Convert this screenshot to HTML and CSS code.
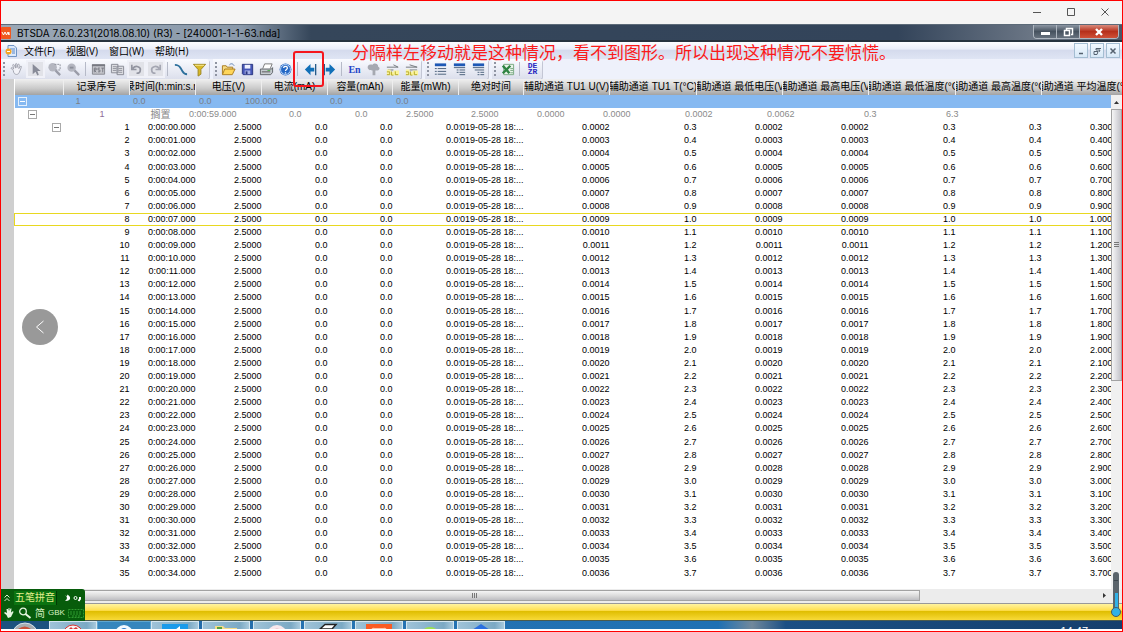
FILE: index.html
```html
<!DOCTYPE html>
<html lang="zh-CN">
<head>
    <meta charset="UTF-8">
    <meta name="viewport" content="width=device-width, initial-scale=1.0">
    <title>BTSDA</title>
    <link rel="stylesheet" href="styles.css">
</head>
<body>
    <div class="viewer">
        <header class="viewer-bar">
            <button aria-label="最小化"><svg width="10" height="10"><path d="M1 5.500h8"/></svg></button>
            <button aria-label="最大化"><svg width="10" height="10"><path d="M1.500 1.500h7v7h-7z"/></svg></button>
            <button aria-label="关闭"><svg width="10" height="10"><path d="M1.500 1.500l7 7M8.500 1.500l-7 7"/></svg></button>
        </header>

        <div class="app">
            <div class="title-bar">
                <svg class="logo" width="10" height="12"><rect width="10" height="12" rx="1" fill="#f0581e"/><path d="M1 5l1.500 3L4 5l1.500 3L7 5l1 3V5" fill="none" stroke="#fff"/></svg>
                <h1>BTSDA 7.6.0.231(2018.08.10) (R3) - [240001-1-1-63.nda]</h1>
                <div class="window-buttons">
                    <button aria-label="最小化"><svg width="12" height="10"><rect x="2" y="5" width="9" height="3" fill="#fff"/></svg></button>
                    <button aria-label="还原"><svg width="12" height="10"><path d="M4.500 3V1.500h6v6H9M2.500 3.500h5v5h-5z" fill="none" stroke="#fff" stroke-width="1.500"/></svg></button>
                    <button class="close" aria-label="关闭"><svg width="12" height="10"><path d="M3 2l6 6M9 2L3 8" stroke="#fff" stroke-width="2.400"/></svg></button>
                </div>
            </div>

            <nav class="menu-bar">
                <svg class="doc-icon" width="12" height="12"><path d="M3 .5h6l2.500 2.500v8.500H3z" fill="#dce9fa" stroke="#6f93c4"/><path d="M5 4h5M7 6h3M7 8h3" stroke="#5a86c8"/><circle cx="3.500" cy="6.500" r="3" fill="#f5a623"/><path d="M2 6.500h3" stroke="#fff"/></svg>
                <a href="#">文件(F)</a>
                <a href="#">视图(V)</a>
                <a href="#">窗口(W)</a>
                <a href="#">帮助(H)</a>
                <div class="mdi-buttons">
                    <button aria-label="最小化"><svg width="10" height="10"><path d="M3 7.500h4" stroke-width="1.500"/></svg></button>
                    <button aria-label="还原"><svg width="10" height="10"><path d="M4 4V2.500h5M4 4h4l-1 2M2 5.500h4L5 8.500H2z"/></svg></button>
                    <button aria-label="关闭"><svg width="10" height="10"><path d="M2.500 2.500l5 5M7.500 2.500l-5 5" stroke-width="1.500"/></svg></button>
                </div>
            </nav>

            <div class="toolbar">
                <div class="tool-group">
                    <button aria-label="拖动"><svg viewBox="0 0 16 16"><path d="M4.500 9L2 6.500c1-1 2 0 3 1L4 3c1-1 1.500 0 2 1l1 2.500V2c1-1 1.500 0 1.500.5V6l1-3.500c1-.5 1.500 0 1.500 1L10.500 7l2-2.500c1 0 1 .5.5 1.500L11 11c-1 3-5 3-6 0z" fill="#f2f2f8" stroke="#a0a2ae"/></svg></button>
                    <button class="chosen" aria-label="选择"><svg viewBox="0 0 16 16"><path d="M5 2v11l3-2.500 2 4 1.500-1-1.500-4h3.500z" fill="#888b98"/></svg></button>
                    <button aria-label="区域放大"><svg viewBox="0 0 16 16"><circle cx="6" cy="5.500" r="4.500" fill="#b4b6c0"/><path d="M8 2.500h6v6H9" fill="none" stroke="#8c8f9a" stroke-dasharray="2 1"/><path d="M9 9l5 5" stroke="#9a9ca8" stroke-width="2.500"/></svg></button>
                    <button aria-label="放大"><svg viewBox="0 0 16 16"><circle cx="6" cy="6" r="4.500" fill="#b4b6c0"/><path d="M4 6h4" stroke="#8c8f9a" stroke-width="2"/><path d="M9 9l5 5" stroke="#9a9ca8" stroke-width="2.500"/></svg></button>
                    <span class="separator"></span>
                    <button aria-label="重置"><svg viewBox="0 0 16 16"><path d="M1.500 3v10h13V3z" fill="#c4c5cb" stroke="#85878f"/><path d="M1 3.500h14" stroke="#777982" stroke-width="2"/><path d="M3.500 11V6.500h2v2h-2l2 2.500M9.500 6.500h-2v2h2v2h-2M11 6.500h3M12.500 6.500V11" fill="none" stroke="#777982"/></svg></button>
                    <button aria-label="复制"><svg viewBox="0 0 16 16"><path d="M1.500 2.500h7v9h-7zM7.500 4.500h7v9h-7z" fill="#dcdde2" stroke="#878a94"/><path d="M3 5h4M3 7h4M3 9h4M9 7h4M9 9h4M9 11h4" stroke="#90929c"/></svg></button>
                    <button class="chosen" aria-label="撤销"><svg viewBox="0 0 16 16"><path d="M3 3v5h5M4 7c3-4 9-2 8 2 0 2-2 3-4 3" fill="none" stroke="#9294a0" stroke-width="1.800"/></svg></button>
                    <button class="chosen" aria-label="重做"><svg viewBox="0 0 16 16"><path d="M13 3v5H8M12 7C9 3 3 5 4 9c0 2 2 3 4 3" fill="none" stroke="#a4a6b2" stroke-width="1.800"/></svg></button>
                    <span class="separator"></span>
                    <button aria-label="曲线"><svg viewBox="0 0 16 16"><path d="M2 3c5 0 5 2 7 5s2 5 6 5" fill="none" stroke="#2c6f9c" stroke-width="2"/></svg></button>
                    <button aria-label="筛选"><svg viewBox="0 0 16 16"><path d="M1.500 2.500h13L9.500 8v5l-3 2V8z" fill="#d9b928" stroke="#9b8420"/><path d="M3 3.500h10" stroke="#f8eb9a"/></svg></button>
                </div>
                <div class="tool-group">
                    <button aria-label="打开"><svg viewBox="0 0 16 16"><path d="M1.500 13V4h4l1 1.500h6V8" fill="#f6dc83" stroke="#a97b20"/><path d="M1.500 13.500L4 7.500h11l-3 6z" fill="#ffd65a" stroke="#a97b20"/><path d="M9 3c2-2 4-1 5 1" fill="none" stroke="#557bb0"/></svg></button>
                    <button aria-label="保存"><svg viewBox="0 0 16 16"><path d="M2.500 2.500h11v11h-10l-1-1z" fill="#4656b8" stroke="#29347f"/><path d="M5 3h6v4H5z" fill="#edf0ff"/><path d="M5 9h6v4H5z" fill="#a8b2e8"/><path d="M6 10h2v3H6z" fill="#29347f"/></svg></button>
                    <button aria-label="打印"><svg viewBox="0 0 16 16"><path d="M4 7l2-5h8l-2 5" fill="#fff" stroke="#777"/><path d="M1.500 7.500h12l1-1.500v5l-2 2.500h-11z" fill="#c5cad0" stroke="#5e6368"/><path d="M3 10.500h9" stroke="#555"/><path d="M9 9h3" stroke="#49a849"/></svg></button>
                    <button aria-label="帮助"><svg viewBox="0 0 16 16"><circle cx="8" cy="8" r="6.300" fill="#2467c5"/><circle cx="8" cy="8" r="5.300" fill="none" stroke="#c7defb"/><path d="M6 6.500C6 4 10 4 10 6.500 10 8 8 8 8 9.500M8 11v1.300" fill="none" stroke="#fff" stroke-width="1.400"/></svg></button>
                    <span class="separator"></span>
                    <button aria-label="左移"><svg viewBox="0 0 16 16"><path d="M2 8l6-6v4h4v4H8v4z" fill="#1170b8"/><path d="M13.500 2v12" stroke="#275b89" stroke-width="1.400"/></svg></button>
                    <button aria-label="右移"><svg viewBox="0 0 16 16"><path d="M14 8L8 2v4H4v4h4v4z" fill="#1170b8"/><path d="M2.500 2v12" stroke="#275b89" stroke-width="1.400"/></svg></button>
                    <span class="separator"></span>
                    <button class="lang-button">En</button>
                    <button aria-label="云"><svg viewBox="0 0 16 16"><path d="M7 9v5h3V9c4 1 6-3 3-4 0-4-5-4-6-2-4-1-6 1-5 4 1 2 3 2 5 2z" fill="#a6a9b1"/></svg></button>
                    <button aria-label="导入"><svg viewBox="0 0 16 16"><path d="M2 5.500h12M9 3l5 2.500M3 8.500h6" stroke="#70757b"/><path d="M2 8h4v3h3v-2h6v5H2z" fill="#fbf49b"/><path d="M2 10.500h3v3H2M7 10v4h2M11 10v3.500h3" fill="none" stroke="#b4a72b"/></svg></button>
                    <button aria-label="导出"><svg viewBox="0 0 16 16"><path d="M2 5.500h12M6 3l8 2.500M6 8.500h8" stroke="#70757b"/><path d="M2 8h4v3h3v-2h6v5H2z" fill="#fbf49b"/><path d="M2 10.500h3v3H2M7 10v4h2M11 10v3.500h3" fill="none" stroke="#b4a72b"/></svg></button>
                </div>
                <div class="tool-group">
                    <button aria-label="一级展开"><svg viewBox="0 0 16 16"><path d="M2 3h12" stroke="#1e58b5" stroke-width="3"/><path d="M2 7h2M5 7h9M2 10h2M5 10h9M2 13h2M5 13h9" stroke="#465d78"/></svg></button>
                    <button aria-label="二级展开"><svg viewBox="0 0 16 16"><path d="M2 3h12" stroke="#1e58b5" stroke-width="3"/><path d="M2 6h12M5 8.500h2M8 8.500h6M5 11h2M8 11h6M8 13.500h6" stroke="#465d78"/></svg></button>
                    <button aria-label="三级展开"><svg viewBox="0 0 16 16"><path d="M2 3h12" stroke="#1e58b5" stroke-width="3"/><path d="M2 6h12M4 8.500h10M7 11h2M10 11h4M7 13.500h2M10 13.500h4" stroke="#465d78"/></svg></button>
                </div>
                <div class="tool-group">
                    <button aria-label="导出表格"><svg viewBox="0 0 16 16"><path d="M4 2.500h10.500v11H4z" fill="#e9f4e9" stroke="#76a680"/><path d="M3 4l7 8M11 4l-8 8" stroke="#2f8342" stroke-width="2.600"/><path d="M11 7h3M11 9h3M11 11.500h3" stroke="#76a680"/></svg></button>
                    <span class="separator"></span>
                    <button class="code-button"><span>DE</span><span>ZR</span></button>
                </div>
                <div class="split-marker"></div>
            </div>
            <p class="note">分隔样左移动就是这种情况，看不到图形。所以出现这种情况不要惊慌。</p>

            <main class="data-area">
                <div class="table-box">
                    <table>
                        <colgroup>
                            <col class="col-tree"><col class="col-small"><col class="col-small"><col class="col-small"><col class="col-small"><col class="col-narrow"><col class="col-small"><col class="col-narrow">
                            <col class="col-wide"><col class="col-wider"><col class="col-wide"><col class="col-wide"><col class="col-wider"><col class="col-wide"><col>
                        </colgroup>
                        <thead>
                            <tr>
                                <th></th>
                                <th><div>记录序号</div></th>
                                <th><div>记录时间(h:min:s.ms)</div></th>
                                <th><div>电压(V)</div></th>
                                <th><div>电流(mA)</div></th>
                                <th><div>容量(mAh)</div></th>
                                <th><div>能量(mWh)</div></th>
                                <th><div>绝对时间</div></th>
                                <th><div>辅助通道 TU1 U(V)</div></th>
                                <th><div>辅助通道 TU1 T(°C)</div></th>
                                <th><div>辅助通道 最低电压(V)</div></th>
                                <th><div>辅助通道 最高电压(V)</div></th>
                                <th><div>辅助通道 最低温度(°C)</div></th>
                                <th><div>辅助通道 最高温度(°C)</div></th>
                                <th><div>辅助通道 平均温度(°C)</div></th>
                            </tr>
                        </thead>
                        <tbody id="records">
                            <tr class="cycle">
                                <td colspan="15">
                                    <div class="cycle-cells">
                                        <button class="toggle" aria-label="折叠"></button>
                                        <span>1</span><span>0.0</span><span>0.0</span><span>100.000</span><span>0.0</span><span>0.0</span>
                                    </div>
                                </td>
                            </tr>
                            <tr class="step">
                                <td colspan="15">
                                    <div class="step-cells">
                                        <button class="toggle" aria-label="折叠"></button>
                                        <span class="step-number">1</span><span class="step-name">搁置</span><span>0:00:59.000</span><span>0.0</span><span>0.0</span><span>2.5000</span><span>2.5000</span><span>0.0000</span><span>0.0000</span><span>0.0002</span><span>0.0062</span><span>0.3</span><span>6.3</span>
                                    </div>
                                </td>
                            </tr>
                        </tbody>
                    </table>
                </div>
                <div class="scroll-y">
                    <button aria-label="向上"><svg width="5" height="3"><path d="M0 3l2.500-3L5 3z" fill="#333"/></svg></button>
                    <div class="thumb"><span class="ridges"></span></div>
                </div>
                <button class="previous" aria-label="上一张"><svg width="10" height="14"><path d="M8.500 1L1.500 7l7 6" fill="none" stroke="#fff"/></svg></button>
            </main>

            <div class="scroll-x">
                <div class="thumb"><span class="ridges"></span></div>
                <button aria-label="向右"><svg width="3" height="5"><path d="M0 0l3 2.500L0 5z" fill="#333"/></svg></button>
            </div>
            <div class="status-bar"></div>

            <footer class="taskbar">
                <button class="task start" aria-label="开始"><svg width="30" height="8"><circle cx="15" cy="15" r="13" fill="#a7adb2" stroke="#d8e4ea"/><path d="M8 8q7-5 13 0z" fill="#c9513a"/></svg></button>
                <button class="task light" aria-label="任务"><svg width="24" height="8"><circle cx="12" cy="13" r="10" fill="#f6f6f6" stroke="#d33"/><path d="M7 8l3-3 2 2 3-2 3 3z" fill="#d33"/></svg></button>
                <button class="task dark" aria-label="浏览器"><svg width="24" height="8"><circle cx="12" cy="12" r="9" fill="#f4faff"/><path d="M8 8q4-4 8 0z" fill="#2878c8"/></svg></button>
                <button class="task" aria-label="聊天"><svg width="26" height="8"><path d="M0 2h26v6H0z" fill="#1a9bea"/><path d="M13 8l5-4v4z" fill="#fff"/></svg></button>
                <button class="task" aria-label="文件夹"><svg width="26" height="8"><path d="M2 8V4h8l2 2h12v2z" fill="#f4dc8a"/><path d="M4 6h5" stroke="#57a03c" stroke-width="2"/></svg></button>
                <button class="task" aria-label="邮件"><svg width="26" height="8"><circle cx="13" cy="13" r="10" fill="#f7e8ec"/><path d="M9 8q4-3 8 0z" fill="#e5a9b5"/></svg></button>
                <button class="task" aria-label="画图"><svg width="26" height="8"><path d="M5 7l5-4.500h11L17 7z" fill="#fff" stroke="#222" stroke-width="1.500"/></svg></button>
                <button class="task" aria-label="BTSDA"><svg width="26" height="8"><path d="M0 2h26v6H0z" fill="#fa5b23"/><path d="M5 8q1-3 4-2h8q3-1 4 2z" fill="#ffc3a8"/></svg></button>
                <button class="task" aria-label="助手"><svg width="26" height="8"><ellipse cx="13" cy="9" rx="7" ry="4" fill="#9be052"/></svg></button>
                <button class="task" aria-label="文档"><svg width="26" height="8"><path d="M4 8l9-6 9 6z" fill="#2a6fe0"/></svg></button>
                <span class="clock">14:47</span>
            </footer>
        </div>

        <div class="ime">
            <div class="ime-row">
                <svg width="8" height="12"><path d="M1.500 5.500L4 3l2.500 2.500M1.500 9L4 6.500 6.500 9" fill="none" stroke="#d8f0d0"/></svg>
                <span class="ime-name">五笔拼音</span>
                <svg width="22" height="12"><path d="M5 3q4 3 0 6 6 0 5-4-1-2-3-2.500 1 3-2 .5z" fill="#fff"/><circle cx="15.500" cy="6" r="1.500" fill="none" stroke="#fff"/><path d="M20 5v2l-1.500 2" fill="none" stroke="#fff" stroke-width="2"/></svg>
            </div>
            <div class="ime-row">
                <svg width="12" height="12"><path d="M3.500 8L1 6l1-1 2 1-.5-4H5l.5 2V1h1v3l1-2.500h1L8 5.500 10 4l.5 1L8 10l-3 1z" fill="#e6f5e0"/></svg>
                <svg width="14" height="12"><circle cx="5" cy="4.500" r="3.300" fill="none" stroke="#e6f5e0" stroke-width="1.300"/><path d="M7.500 7l5 4" stroke="#e6f5e0" stroke-width="2"/></svg>
                <span>简</span>
                <span class="ime-code">GBK</span>
                <svg width="16" height="12"><path d="M.5 2.500h15v8H.5zM2 5h12M2 7h12M4 9h8" fill="none" stroke="#2f9a2f" stroke-dasharray="2 1"/></svg>
            </div>
        </div>
        <svg class="thermometer" width="12" height="48"><rect x="3" y="1" width="6" height="42" rx="3" fill="#5b646b"/><path d="M4 9.500h4" stroke="#3d464d"/><path d="M6.500 22v18" stroke="#31b1e6" stroke-width="3"/><circle cx="6" cy="41" r="4.500" fill="#31b1e6" stroke="#4b5961"/></svg>
    </div>

    <script>
        const records = document.getElementById('records');

        // One record every second, readings rise by one step each time
        for (let n = 1; n <= 35; n++) {
            const seconds = String(n - 1).padStart(2, '0');
            const volt = ((n + 1) / 10000).toFixed(4);
            const temp = ((n + 2) / 10).toFixed(1);
            const cells = [
                n === 1 ? '<button class="toggle" aria-label="折叠"></button>' : '',
                n, `0:00:${seconds}.000`, '2.5000', '0.0', '0.0', '0.0',
                '<div class="date">2019-05-28 18:...</div>',
                volt, temp, volt, volt, temp, temp, temp + '000'
            ];
            const row = document.createElement('tr');
            if (n === 8) {
                row.className = 'selected';
            }
            row.innerHTML = cells.map(cell => `<td>${cell}</td>`).join('');
            records.appendChild(row);
        }
    </script>
</body>
</html>
```

FILE: styles.css
```css
* {
    box-sizing: border-box;
    margin: 0;
    padding: 0;
}

body {
    font-family: "Liberation Sans", "Noto Sans CJK SC", sans-serif;
    font-size: 10px;
    color: #000;
}

button {
    border: none;
    background: none;
    font: inherit;
    display: flex;
    align-items: center;
    justify-content: center;
}

a {
    color: inherit;
    text-decoration: none;
}

.viewer {
    position: relative;
    height: 100vh;
    border: 1px solid #f00;
    padding-bottom: 2px;
    display: flex;
    flex-direction: column;
    overflow: hidden;
}

.viewer-bar {
    height: 23px;
    background: #f4f4f4;
    display: flex;
    justify-content: flex-end;
    flex-shrink: 0;
}

.viewer-bar button {
    width: 34px;
    height: 21px;
}

.viewer-bar svg {
    fill: none;
    stroke: #555;
}

.app {
    flex: 1;
    min-height: 0;
    display: flex;
    flex-direction: column;
}

/* Title bar */
.title-bar {
    height: 18px;
    flex-shrink: 0;
    display: flex;
    align-items: center;
    background: linear-gradient(90deg, #9aa7b5, #8b9aab 240px, #35465a 310px, #33445a 80%, #6b7685 92%, #4a5868);
    border-bottom: 2px solid #27333f;
    border-top: 1px solid #5c6a78;
}

.title-bar h1 {
    font-family: Inter, sans-serif;
    font-size: 10px;
    font-weight: normal;
    line-height: 14px;
    margin-left: 6px;
    flex: 1;
}

.window-buttons {
    display: flex;
    align-self: flex-start;
    margin-right: 3px;
    border: 1px solid #aeb6c0;
    border-top: none;
    border-radius: 0 0 4px 4px;
    overflow: hidden;
}

.window-buttons button {
    width: 23px;
    height: 13px;
    background: linear-gradient(#8d97a4, #46525f 50%, #66717e);
    border-right: 1px solid #aeb6c0;
}

.window-buttons .close {
    width: 38px;
    background: linear-gradient(#d98a7c, #b6301b 50%, #cf5037);
    border-right: none;
}

/* Menu bar */
.menu-bar {
    height: 17px;
    flex-shrink: 0;
    padding-left: 4px;
    display: flex;
    align-items: center;
    gap: 11px;
    font-family: "Open Sans", "Noto Sans CJK SC", sans-serif;
    line-height: 14px;
    background: linear-gradient(#fdfdff, #eceff9 40%, #d5dbed 50%, #dfe5f4);
}

.doc-icon {
    margin-right: -4px;
}

.mdi-buttons {
    margin-left: auto;
    margin-right: 2px;
    display: flex;
    gap: 2px;
}

.mdi-buttons button {
    width: 14px;
    height: 15px;
    border: 1px solid #a4bdd2;
    background: linear-gradient(#f3f9ff, #d7e8f7);
}

.mdi-buttons svg {
    fill: none;
    stroke: #556270;
}

/* Toolbar */
.toolbar {
    position: relative;
    height: 20px;
    flex-shrink: 0;
    display: flex;
    gap: 4px;
    background: #eef1fb;
}

.tool-group {
    display: flex;
    align-items: center;
    padding-left: 6px;
    background: linear-gradient(#fafbff, #dcdfec);
    border-radius: 0 3px 3px 0;
    box-shadow: 1px 1px 0 #c3c6d4;
}

.tool-group::before {
    content: "";
    width: 2px;
    height: 14px;
    margin-left: -4px;
    margin-right: 2px;
    background: repeating-linear-gradient(#8f94a2 0 2px, transparent 2px 4px);
}

.tool-group button {
    width: 19px;
    height: 18px;
}

.tool-group svg {
    width: 15px;
    height: 15px;
}

.tool-group .chosen {
    background: #e1e2e8;
    border: 2px solid #f0f1f8;
}

.separator {
    width: 1px;
    height: 14px;
    margin: 0 3px 0 2px;
    background: #b6bac8;
}

.tool-group .lang-button {
    font-family: "Liberation Serif", serif;
    font-weight: bold;
    color: #2446c8;
}

.tool-group .code-button {
    flex-direction: column;
    font-family: "Liberation Mono", monospace;
    font-size: 8px;
    line-height: 6px;
    font-weight: bold;
    color: #2a2ac0;
}

.split-marker {
    position: absolute;
    top: -8px;
    left: 292px;
    width: 31px;
    height: 36px;
    border: 2px solid #f5161d;
    border-radius: 3px;
    z-index: 2;
}

.note {
    position: absolute;
    top: 39px;
    left: 351px;
    font-family: "Noto Sans CJK SC", sans-serif;
    font-size: 17px;
    line-height: 24px;
    white-space: nowrap;
    color: #fb1a1a;
}

/* Data table */
.data-area {
    position: relative;
    flex: 1;
    min-height: 0;
    display: flex;
    padding-left: 13px;
    background: #cfcfcf;
}

.table-box {
    flex: 1;
    min-width: 0;
    overflow: hidden;
    background: #fff;
}

table {
    width: 100%;
    min-width: 1113px;
    height: 501px;
    table-layout: fixed;
    border-collapse: collapse;
    font-size: 9px;
    line-height: 11px;
}

.col-tree { width: 49px; }
.col-narrow { width: 65px; }
.col-small { width: 66px; }
.col-wide { width: 86px; }
.col-wider { width: 87px; }

th {
    height: 16px;
    font-size: 10px;
    font-weight: normal;
    background: linear-gradient(#f0f0f0, #c9c9c9 60%, #a3a3a3);
    border-right: 1px solid #eee;
}

th div {
    display: flex;
    justify-content: center;
    overflow: hidden;
    white-space: nowrap;
    line-height: 14px;
}

td {
    text-align: right;
    white-space: nowrap;
}

td:last-child {
    padding-right: 9px;
}

.date {
    display: flex;
    justify-content: flex-end;
    overflow: hidden;
}

.cycle {
    background: #86b9f1;
    color: #7b7f86;
}

.step {
    color: #8a8a8a;
}

.step-number {
    color: #8c6c98;
}

.step-name {
    font-size: 10px;
}

.cycle-cells,
.step-cells {
    position: relative;
    display: grid;
}

.cycle-cells {
    grid-template-columns: 66px 65px 66px 66px 65px 66px;
}

.step-cells {
    grid-template-columns: 90px 66px 66px 65px 66px 66px 65px 66px 66px 82px 82px 82px 82px;
}

.toggle {
    width: 9px;
    height: 9px;
    border: 1px solid #a9a9a9;
    background: linear-gradient(#777, #777) center / 5px 1px no-repeat #fff;
    margin-left: 37px;
}

.cycle-cells .toggle {
    position: absolute;
    top: 1px;
    left: 3px;
    margin: 0;
    border-color: #e4f0fd;
    background: linear-gradient(#fff, #fff) center / 5px 1px no-repeat;
}

.step-cells .toggle {
    position: absolute;
    top: 1px;
    left: 13px;
    margin: 0;
}

.selected {
    border: 1px solid #e8d820;
    line-height: 9px;
}

/* Scrollbars */
.scroll-y {
    position: absolute;
    top: 16px;
    right: 0;
    bottom: 0;
    width: 11px;
    background: #f0f0f0;
}

.scroll-y button {
    width: 11px;
    height: 14px;
}

.thumb {
    display: flex;
    align-items: center;
    justify-content: center;
    border: 1px solid #a2a2a2;
}

.scroll-y .thumb {
    height: 272px;
    background: linear-gradient(90deg, #f6f6f6, #dcdce0 50%, #c2c2c8);
}

.ridges {
    width: 6px;
    height: 5px;
    background: repeating-linear-gradient(90deg, #777 0 1px, transparent 1px 2px);
}

.scroll-y .ridges {
    width: 5px;
    height: 6px;
    background: repeating-linear-gradient(#777 0 1px, transparent 1px 2px);
}

.scroll-x {
    height: 15px;
    padding-top: 1px;
    padding-bottom: 2px;
    flex-shrink: 0;
    display: flex;
    justify-content: space-between;
    background: #ececec;
    border-bottom: 1px solid #999;
}

.scroll-x .thumb {
    width: 82%;
    padding-left: 28px;
    background: linear-gradient(#f5f5f5, #dcdcdc 50%, #bebec2);
}

.scroll-x button {
    width: 35px;
}

.previous {
    position: absolute;
    top: 230px;
    left: 21px;
    width: 36px;
    height: 36px;
    border-radius: 50%;
    background: #999;
}

.status-bar {
    height: 17px;
    flex-shrink: 0;
    background: linear-gradient(#fff3a0, #ffdf50 40%, #dfbd00 45%, #f8da38);
    border-bottom: 1px solid #4b5a4c;
}

/* Taskbar */
.taskbar {
    height: 8px;
    flex-shrink: 0;
    display: flex;
    gap: 3px;
    overflow: hidden;
    background: linear-gradient(90deg, #1d5f9a, #2673b2 30%, #1f70b3 64%, #71889c 67%, #1b4f84 70%, #153f6d);
}

.task {
    width: 48px;
    height: 8px;
    flex-shrink: 0;
    background: linear-gradient(90deg, #9fc3d8, #7ba9c4 80%, #a8c9dc);
    border: 1px solid #d4e6f0;
    border-bottom: none;
}

.start {
    background: #1c527f;
    border: none;
}

.start,
.light,
.dark {
    margin-right: -3px;
}

.dark {
    width: 54px;
    background: #3686bd;
    border-color: #5fa6d0;
}

.clock {
    margin-left: auto;
    margin-right: 34px;
    padding-top: 4px;
    font-size: 11px;
    line-height: 12px;
    color: #fff;
}

/* Input method panel */
.ime {
    position: absolute;
    left: 0;
    bottom: 10px;
    width: 84px;
    height: 32px;
    padding: 1px;
    border-radius: 0 3px 0 0;
    background: #075c0b;
    color: #d9f3c4;
}

.ime-row {
    height: 15px;
    display: flex;
    align-items: center;
    gap: 3px;
    padding-left: 1px;
}

.ime-name {
    padding: 0 1px;
    line-height: 14px;
    color: #e6ef8c;
    background: #0b7410;
    border-right: 1px solid #033a05;
}

.ime-code {
    font-size: 8px;
    font-family: "Liberation Sans", sans-serif;
}

.thermometer {
    position: absolute;
    right: 0;
    bottom: 12px;
}
```
